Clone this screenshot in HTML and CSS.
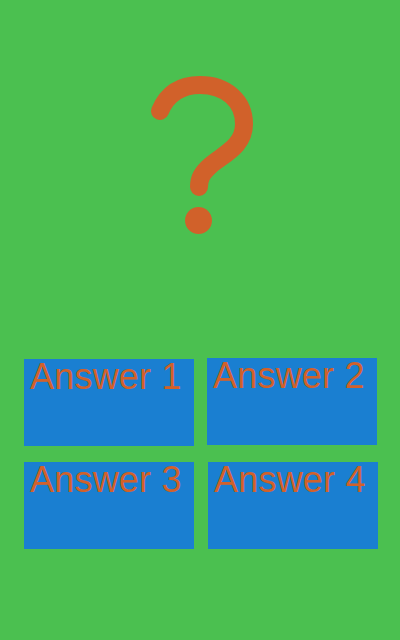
FILE: index.html
```html
<!DOCTYPE html>
<html>
<head>
<meta charset="utf-8">
<link rel="stylesheet" href="styles.css">
</head>
<body>
<div class="page">
  <svg class="qmark" width="400" height="250" viewBox="0 0 400 250">
    <path d="M160 111 C 168 92 183 85 200 85 C 226 85 244 101 244 124 C 244 146 224 154 211 165 C 202 173 199 178 199 187" fill="none" stroke="#d1612a" stroke-width="18" stroke-linecap="round" stroke-linejoin="round"/>
    <circle cx="198.5" cy="220.5" r="13.5" fill="#d1612a"/>
  </svg>
  <div class="answers">
    <div class="answer">Answer 1</div>
    <div class="answer answer-raised">Answer 2</div>
    <div class="answer">Answer 3</div>
    <div class="answer answer-shifted">Answer 4</div>
  </div>
</div>
</body>
</html>
```
FILE: styles.css
```css
html, body {
  margin: 0;
  padding: 0;
  background: #4bc050;
}
.page {
  width: 400px;
  height: 640px;
  display: flex;
  flex-direction: column;
}
.qmark {
  display: block;
}
.answers {
  margin-top: 109px;
  padding-left: 24px;
  display: grid;
  grid-template-columns: 170px 170px;
  grid-auto-rows: 87px;
  column-gap: 13px;
  row-gap: 16px;
}
.answer {
  background: #1a7fd1;
  color: #d1612a;
  font-family: "Liberation Sans", Arial, sans-serif;
  font-size: 36px;
  line-height: 36px;
  letter-spacing: 0.2px;
  padding-left: 6px;
  white-space: nowrap;
}
.answer-raised {
  margin-top: -1px;
  margin-bottom: 1px;
}
.answer-shifted {
  margin-left: 1px;
  margin-right: -1px;
}
```
